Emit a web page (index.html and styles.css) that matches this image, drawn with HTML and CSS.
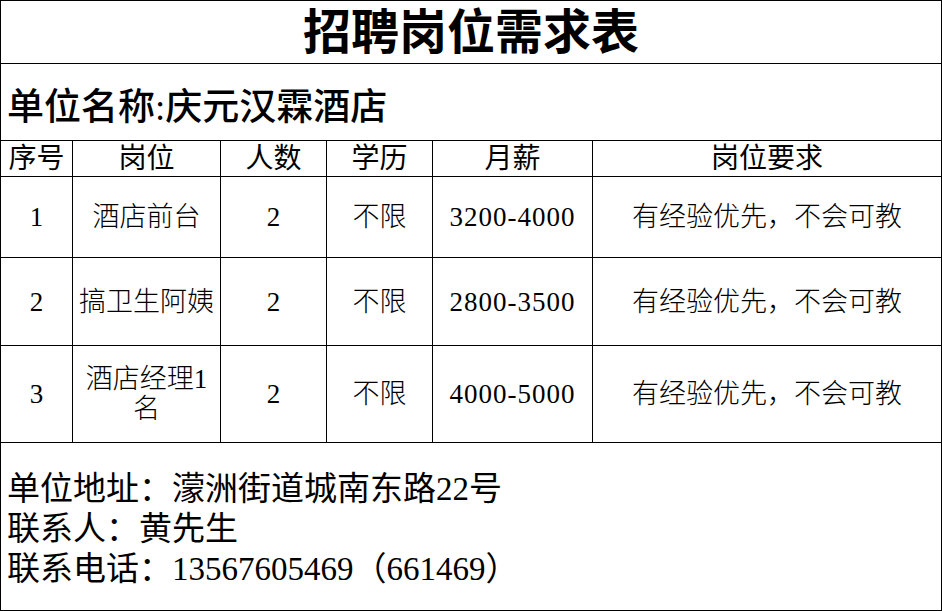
FILE: index.html
```html
<!DOCTYPE html>
<html lang="zh-CN">
<head>
<meta charset="utf-8">
<title>招聘岗位需求表</title>
<link rel="stylesheet" href="styles.css">
</head>
<body>
<table class="sheet">
  <colgroup>
    <col class="c-no">
    <col class="c-post">
    <col class="c-num">
    <col class="c-edu">
    <col class="c-pay">
    <col class="c-req">
  </colgroup>
  <tr class="r-title"><td colspan="6" class="title">招聘岗位需求表</td></tr>
  <tr class="r-name"><td colspan="6" class="name">单位名称:庆元汉霖酒店</td></tr>
  <tr class="r-head">
    <td>序号</td><td>岗位</td><td>人数</td><td>学历</td><td>月薪</td><td>岗位要求</td>
  </tr>
  <tr class="r-1 body">
    <td>1</td><td>酒店前台</td><td>2</td><td>不限</td><td class="pay">3200-4000</td><td>有经验优先，不会可教</td>
  </tr>
  <tr class="r-2 body">
    <td>2</td><td>搞卫生阿姨</td><td>2</td><td>不限</td><td class="pay">2800-3500</td><td>有经验优先，不会可教</td>
  </tr>
  <tr class="r-3 body">
    <td>3</td><td class="wrap">酒店经理1名</td><td>2</td><td>不限</td><td class="pay">4000-5000</td><td>有经验优先，不会可教</td>
  </tr>
  <tr class="r-foot">
    <td colspan="6" class="foot">
      <div>单位地址：濛洲街道城南东路22号</div>
      <div>联系人：黄先生</div>
      <div>联系电话：13567605469（661469）</div>
    </td>
  </tr>
</table>
</body>
</html>
```
FILE: styles.css
```css
html, body {
  margin: 0;
  padding: 0;
  background: #ffffff;
}
body {
  font-family: "Liberation Serif", "Noto Sans CJK SC", serif;
  color: #000000;
}
.sheet {
  border-collapse: collapse;
  table-layout: fixed;
  width: 941px;
}
.sheet td {
  border: 1px solid #000000;
  padding: 0 5px;
  text-align: center;
  vertical-align: middle;
  white-space: normal;
}
.c-no { width: 72px; }
.c-post { width: 148px; }
.c-num { width: 106px; }
.c-edu { width: 106px; }
.c-pay { width: 160px; }
.c-req { width: 349px; }

.r-title { height: 63px; }
.r-name { height: 77px; }
.r-head { height: 36px; }
.r-1 { height: 81px; }
.r-2 { height: 88px; }
.r-3 { height: 97px; }
.r-foot { height: 168px; }

.sheet td.title {
  font-size: 48px;
  font-weight: 700;
  line-height: 56px;
  padding-top: 2px;
}
.sheet td.name {
  text-align: left;
  font-size: 37px;
  font-weight: 500;
  padding-left: 6px;
  padding-top: 4px;
}
.r-head td {
  font-size: 28px;
  line-height: 32px;
  padding: 0 2px;
}
.body td {
  font-size: 27px;
  line-height: 30px;
  font-weight: 300;
}
.body td.wrap {
  padding: 0 6px;
}
.body td.pay {
  letter-spacing: 1px;
}
.sheet td.foot {
  text-align: left;
  font-size: 33px;
  line-height: 40px;
  padding-left: 6px;
  padding-top: 4px;
}
```
